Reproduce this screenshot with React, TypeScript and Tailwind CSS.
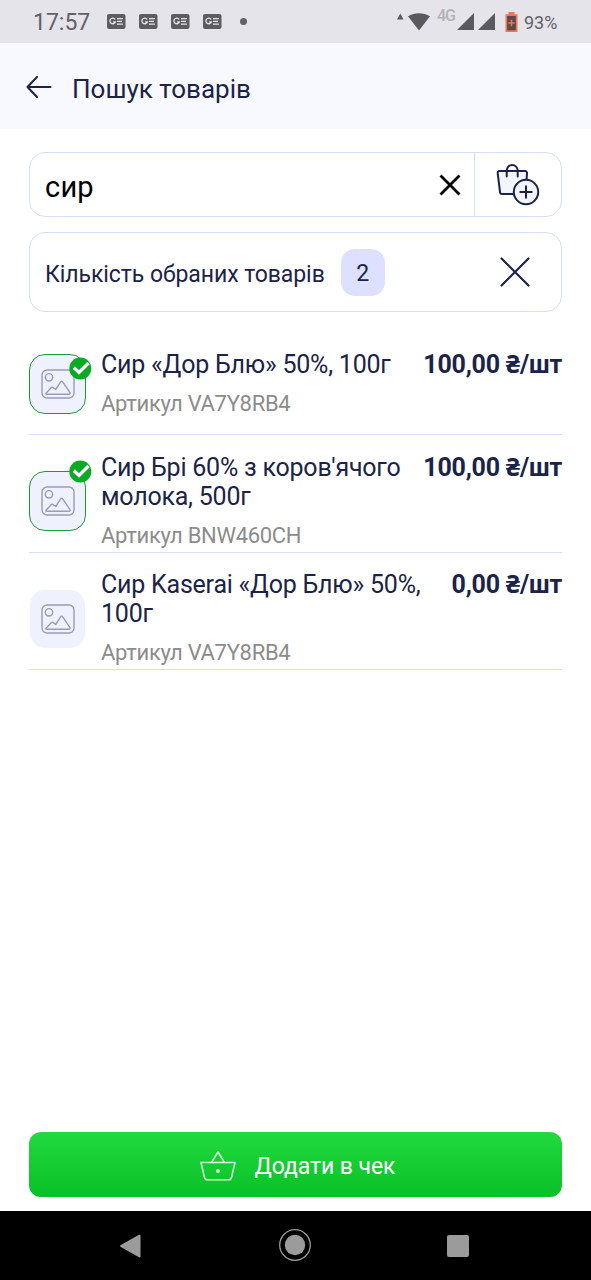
import React from 'react';

type Product = {
  id: number;
  title: string;
  sku: string;
  price: string;
  selected: boolean;
};

const products: Product[] = [
  { id: 1, title: 'Сир «Дор Блю» 50%, 100г', sku: 'VA7Y8RB4', price: '100,00', selected: true },
  { id: 2, title: "Сир Брі 60% з коров'ячого молока, 500г", sku: 'BNW460CH', price: '100,00', selected: true },
  { id: 3, title: 'Сир Kaserai «Дор Блю» 50%, 100г', sku: 'VA7Y8RB4', price: '0,00', selected: false },
];

const NewsIcon = () => (
  <svg width="19" height="15" viewBox="0 0 19 15" fill="none">
    <rect width="18.5" height="15" rx="2" fill="#5d5d61" />
    <path d="M8 5.3A2.8 2.8 0 1 0 8.4 7.8H6" stroke="#e5e4ea" strokeWidth="1.3" />
    <path d="M10 4.6h6M10 7.4h5M10 10.2h6" stroke="#e5e4ea" strokeWidth="1.3" />
  </svg>
);

const SignalIcon = () => (
  <svg width="17" height="17" viewBox="0 0 17 17">
    <path d="M17 0v17H0z" fill="#5a5a5e" />
  </svg>
);

const StatusBar = () => (
  <div className="flex h-[43px] items-center bg-[#e5e4ea] pr-[33px] pl-[33px] text-[#626166]">
    <span className="w-[58px] pt-[2px] text-[23px] leading-none whitespace-nowrap">17:57</span>
    <div className="ml-[16px] flex gap-[13px]">
      <NewsIcon />
      <NewsIcon />
      <NewsIcon />
      <NewsIcon />
    </div>
    <span className="ml-[18px] size-[7px] rounded-full bg-[#626166]" />
    <div className="ml-auto flex items-center">
      <svg width="33" height="18" viewBox="0 0 33 18" fill="#5a5a5e">
        <path d="M3.3 0.5L6.6 6.5H0z" />
        <path d="M11 3.2C17.5-.8 26.5-.8 33 3.2L22 17.5z" />
      </svg>
      <span className="ml-[7px] h-[34px] w-[17px] text-[16px] leading-[22px] font-medium tracking-[-1.2px] text-[#b3b2b8]">4G</span>
      <div className="ml-[3px] flex gap-[4px]">
        <SignalIcon />
        <SignalIcon />
      </div>
      <svg className="ml-[10px]" width="13" height="20" viewBox="0 0 13 20">
        <path d="M3.5 0h6v2.2h3V20H.5V2.2h3z" fill="#f0735a" />
        <path d="M2.2 4h8.6v14.3H2.2z" fill="#5c4a48" />
        <path d="M6.5 7.8v6.4M3.3 11h6.4" stroke="#f0735a" strokeWidth="1.6" />
      </svg>
      <span className="ml-[6px] w-[34px] pt-[2px] text-[18px] leading-none whitespace-nowrap">93%</span>
    </div>
  </div>
);

const Header = () => (
  <header className="flex h-[86px] items-center bg-[#f8f8ff] pl-[26px]">
    <svg className="mt-[2px]" width="26" height="22" viewBox="0 0 26 22" fill="none" stroke="#1b2348" strokeWidth="2" strokeLinecap="round" strokeLinejoin="round">
      <path d="M11 1L1.5 11l9.5 10M1.5 11h23" />
    </svg>
    <h1 className="ml-[20px] pt-[5px] text-[26px] leading-none">Пошук товарів</h1>
  </header>
);

const SearchField = () => (
  <div className="flex h-[65px] rounded-2xl border border-[#d5dff4] bg-white">
    <div className="flex flex-1 items-center justify-between pr-[13px] pl-[15px]">
      <span className="pt-[6px] text-[29px] leading-none tracking-[0.2px] text-black">сир</span>
      <svg width="22" height="22" viewBox="0 0 22 22" stroke="#000" strokeWidth="2.8">
        <path d="M1.5 1.5l19 19M20.5 1.5l-19 19" />
      </svg>
    </div>
    <div className="flex w-[87px] items-center justify-center border-l border-[#d5dff4]">
      <svg width="44" height="42" viewBox="0 0 44 42" fill="#f3f5ff" stroke="#1b2348" strokeWidth="2" strokeLinecap="round" strokeLinejoin="round">
        <path d="M3.5 7H29a2 2 0 0 1 2 2.200L29.500 30H6a2 2 0 0 1-2-1.800L1.700 9.200A2 2 0 0 1 3.500 7z" />
        <path d="M10.700 12.500V6.500a5.500 5.500 0 0 1 11 0v6" fill="none" />
        <circle cx="30" cy="28" r="12.200" />
        <path d="M30 22.300v11.400M24.300 28h11.400" />
      </svg>
    </div>
  </div>
);

const SelectedCounter = () => (
  <div className="mt-[15px] flex h-[80px] items-center rounded-2xl border border-[#d5dff4] bg-white pr-[31px] pl-[15px]">
    <span className="pt-[5px] text-[23px] leading-none tracking-[-0.06px] whitespace-nowrap">Кількість обраних товарів</span>
    <span className="ml-[16px] flex h-[47px] w-[44px] items-center justify-center rounded-[14px] bg-[#dde0ff] pt-[4px] text-[23px]">2</span>
    <svg className="ml-auto" width="30" height="30" viewBox="0 0 30 30" stroke="#1b2348" strokeWidth="2.2" strokeLinecap="round">
      <path d="M1.5 1.5l27 27M28.5 1.5l-27 27" />
    </svg>
  </div>
);

const Thumbnail = ({ selected }: { selected: boolean }) => (
  <div
    className={
      selected
        ? 'flex h-[60px] w-[57px] shrink-0 items-center justify-center rounded-2xl border border-[#1a9a35] bg-[#eff1ff]'
        : 'flex h-[60px] w-[57px] shrink-0 items-center justify-center rounded-2xl border border-transparent bg-[#eff1ff] bg-clip-padding'
    }
  >
    <svg width="34" height="30" viewBox="0 0 34 30" fill="none" stroke="#9a9cb5" strokeWidth="1.4" strokeLinejoin="round">
      <rect x="1" y="1" width="32" height="28" rx="5" />
      <circle cx="8" cy="8.3" r="3.7" />
      <path d="M5.500 25.300H28a1.100 1.100 0 0 0 1-1.700L21.500 12.700a1 1 0 0 0-1.700 0L14.700 20.500 11.800 18.300a1 1 0 0 0-1.400.3L5 24.200a.7.7 0 0 0 .5 1.100z" />
    </svg>
  </div>
);

const ProductRow = ({ product }: { product: Product }) => (
  <li className="flex h-[117.3px] items-center border-b border-[#d5dff0] pt-4">
    <div className="relative flex w-full items-center">
      <Thumbnail selected={product.selected} />
      {product.selected && (
        <svg className="absolute top-[7px] left-[40px]" width="23" height="23" viewBox="0 0 23 23" fill="none">
          <circle cx="11.3" cy="11.5" r="11" fill="#08ab22" />
          <path d="M4.8 10.5l5.2 4.9L19.500 6" stroke="#fff" strokeWidth="3.3" />
        </svg>
      )}
      <div className="ml-[15px] flex-1">
        <div className="flex justify-between text-[25px] leading-[29px]">
          <p className="w-[322px] tracking-[-0.22px]">{product.title}</p>
          <p className="font-bold tracking-[-0.22px] whitespace-nowrap">{product.price} ₴/шт</p>
        </div>
        <p className="mt-[10px] text-[22px] leading-[29px] tracking-[-0.31px] text-[#8c8c8c]">Артикул {product.sku}</p>
      </div>
    </div>
  </li>
);

const AddButton = () => (
  <button className="mx-[29px] mt-auto mb-[14px] flex h-[65px] items-center justify-center rounded-xl bg-linear-to-b from-[#20da40] to-[#07c125] pl-[4px] text-[23px] tracking-[-0.08px] text-white">
    <svg className="mt-[3px]" width="36" height="30" viewBox="0 0 36 30" fill="none" stroke="#d8ffd8" strokeWidth="1.5" strokeLinecap="round" strokeLinejoin="round">
      <path d="M1 11.500H35L31.500 26.500a3 3 0 0 1-3 2.300H7.500a3 3 0 0 1-3-2.300zM11.500 11.500L18 1l6.500 10.500" />
      <circle cx="18" cy="20" r="1.2" fill="#d8ffd8" />
    </svg>
    <span className="ml-[19px] pt-[5px]">Додати в чек</span>
  </button>
);

const NavigationBar = () => (
  <nav className="flex h-[69px] items-center justify-between bg-black pr-[122px] pl-[120px]">
    <svg width="21" height="24" viewBox="0 0 21 24" fill="#9b9b9b">
      <path d="M19 .8a1 1 0 0 1 1.500 1v20.500a1 1 0 0 1-1.500 1L.8 13a1.200 1.200 0 0 1 0-2z" />
    </svg>
    <svg className="mb-[1px] ml-[2px]" width="32" height="32" viewBox="0 0 32 32" fill="none">
      <circle cx="16" cy="16" r="15.3" stroke="#9b9b9b" strokeWidth="1.3" />
      <circle cx="16" cy="16" r="10.2" fill="#9b9b9b" />
    </svg>
    <span className="size-[22px] rounded-[2px] bg-[#9b9b9b]" />
  </nav>
);

const App: React.FC = () => {
  return (
    <div className="flex h-[1280px] w-[591px] flex-col overflow-hidden bg-white font-['Roboto','Noto_Sans',sans-serif] text-[#1b2348]">
      <StatusBar />
      <Header />
      <main className="px-[29px] pt-[23px]">
        <SearchField />
        <SelectedCounter />
        <ul className="mt-[6px]">
          {products.map((product) => (
            <ProductRow key={product.id} product={product} />
          ))}
        </ul>
      </main>
      <AddButton />
      <NavigationBar />
    </div>
  );
};

export default App;
